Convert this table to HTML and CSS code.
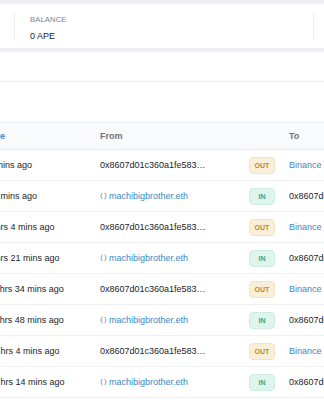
FILE: index.html
```html
<!DOCTYPE html>
<html>
<head>
<meta charset="utf-8">
<link rel="stylesheet" href="styles.css">
</head>
<body>
<div class="page">
  <div class="band"></div>
  <div class="summary">
    <div class="stat-prev"></div>
    <div class="stat">
      <div class="stat-label">BALANCE</div>
      <div class="stat-value">0 APE</div>
    </div>
    <div class="stat-next"></div>
  </div>
  <div class="band"></div>
  <div class="panel">
    <div class="tabs"></div>
    <div class="toolbar"></div>
    <div class="table-wrap">
      <div class="table">
        <div class="row head">
          <div class="cell"><span class="link">Age</span></div>
          <div class="cell">From</div>
          <div class="cell"></div>
          <div class="cell">To</div>
        </div>
        <div class="row">
          <div class="cell">9 mins ago</div>
          <div class="cell">0x8607d01c360a1fe583…</div>
          <div class="cell"><span class="badge out">OUT</span></div>
          <div class="cell"><span class="link">Binance</span></div>
        </div>
        <div class="row">
          <div class="cell">19 mins ago</div>
          <div class="cell"><svg class="ic" viewBox="0 0 9 8" width="9" height="8"><path d="M3 1 Q0.4 4 3 7 M6 1 Q8.6 4 6 7"/></svg><span class="link">machibigbrother.eth</span></div>
          <div class="cell"><span class="badge in">IN</span></div>
          <div class="cell">0x8607d01c360a1fe583…</div>
        </div>
        <div class="row">
          <div class="cell">1 hrs 4 mins ago</div>
          <div class="cell">0x8607d01c360a1fe583…</div>
          <div class="cell"><span class="badge out">OUT</span></div>
          <div class="cell"><span class="link">Binance</span></div>
        </div>
        <div class="row">
          <div class="cell">1 hrs 21 mins ago</div>
          <div class="cell"><svg class="ic" viewBox="0 0 9 8" width="9" height="8"><path d="M3 1 Q0.4 4 3 7 M6 1 Q8.6 4 6 7"/></svg><span class="link">machibigbrother.eth</span></div>
          <div class="cell"><span class="badge in">IN</span></div>
          <div class="cell">0x8607d01c360a1fe583…</div>
        </div>
        <div class="row">
          <div class="cell">11 hrs 34 mins ago</div>
          <div class="cell">0x8607d01c360a1fe583…</div>
          <div class="cell"><span class="badge out">OUT</span></div>
          <div class="cell"><span class="link">Binance</span></div>
        </div>
        <div class="row">
          <div class="cell">11 hrs 48 mins ago</div>
          <div class="cell"><svg class="ic" viewBox="0 0 9 8" width="9" height="8"><path d="M3 1 Q0.4 4 3 7 M6 1 Q8.6 4 6 7"/></svg><span class="link">machibigbrother.eth</span></div>
          <div class="cell"><span class="badge in">IN</span></div>
          <div class="cell">0x8607d01c360a1fe583…</div>
        </div>
        <div class="row">
          <div class="cell">12 hrs 4 mins ago</div>
          <div class="cell">0x8607d01c360a1fe583…</div>
          <div class="cell"><span class="badge out">OUT</span></div>
          <div class="cell"><span class="link">Binance</span></div>
        </div>
        <div class="row">
          <div class="cell">12 hrs 14 mins ago</div>
          <div class="cell"><svg class="ic" viewBox="0 0 9 8" width="9" height="8"><path d="M3 1 Q0.4 4 3 7 M6 1 Q8.6 4 6 7"/></svg><span class="link">machibigbrother.eth</span></div>
          <div class="cell"><span class="badge in">IN</span></div>
          <div class="cell">0x8607d01c360a1fe583…</div>
        </div>
      </div>
    </div>
  </div>
</div>
</body>
</html>
```
FILE: styles.css
```css
html, body {
  margin: 0;
  padding: 0;
  background: #ffffff;
  overflow: hidden;
}
body {
  font-family: "Liberation Sans", Arial, sans-serif;
  font-size: 9px;
  color: #212529;
  width: 324px;
  height: 400px;
}
.page {
  width: 324px;
  overflow: hidden;
}
.band {
  height: 4px;
  background: #eef0f4;
}
.summary {
  display: flex;
  height: 44px;
  background: #ffffff;
  align-items: stretch;
}
.stat-prev {
  width: 14px;
  margin: 9px 0 8px;
  border-right: 1px solid #eceef2;
}
.stat {
  width: 283px;
  padding: 2px 0 0 15px;
  margin: 9px 0 8px;
  border-right: 1px solid #eceef2;
  display: flex;
  flex-direction: column;
}
.stat-next {
  flex: 1;
}
.stat-label {
  font-size: 7.7px;
  line-height: 10px;
  color: #80868e;
  letter-spacing: 0.1px;
}
.stat-value {
  font-size: 9px;
  line-height: 12px;
  margin-top: 5px;
  color: #212529;
}
.panel {
  background: #ffffff;
}
.tabs {
  height: 29px;
  border-bottom: 1px solid #eceff2;
}
.toolbar {
  height: 40px;
}
.table-wrap {
  overflow: hidden;
  width: 324px;
}
.table {
  margin-left: -12px;
  width: 520px;
}
.row {
  display: grid;
  grid-template-columns: 112px 149px 40px 220px;
  height: 30px;
  align-items: center;
  border-bottom: 1px solid #eef0f3;
  white-space: nowrap;
}
.row.head {
  height: 26px;
  background: #f8fafc;
  border-top: 1px solid #eceff3;
  border-bottom: 1px solid #e7eaee;
  color: #6c757d;
  font-weight: 600;
}
.cell {
  display: flex;
  align-items: center;
  overflow: visible;
}
.link {
  color: #3d86c6;
}
.ic {
  width: 9px;
  height: 8px;
  margin: 0 1px 0 -1px;
  fill: none;
  stroke: #9aa3ad;
  stroke-width: 1;
  stroke-linecap: round;
  stroke-linejoin: round;
}
.badge {
  display: inline-flex;
  align-items: center;
  justify-content: center;
  width: 26px;
  height: 17px;
  border-radius: 4px;
  font-size: 7px;
  font-weight: 700;
  box-sizing: border-box;
}
.badge.out {
  background: #f9eed8;
  color: #b88a34;
  border: 1px solid #f3e3c4;
}
.badge.in {
  background: #def4ed;
  color: #3aa484;
  border: 1px solid #cdede3;
}
```
